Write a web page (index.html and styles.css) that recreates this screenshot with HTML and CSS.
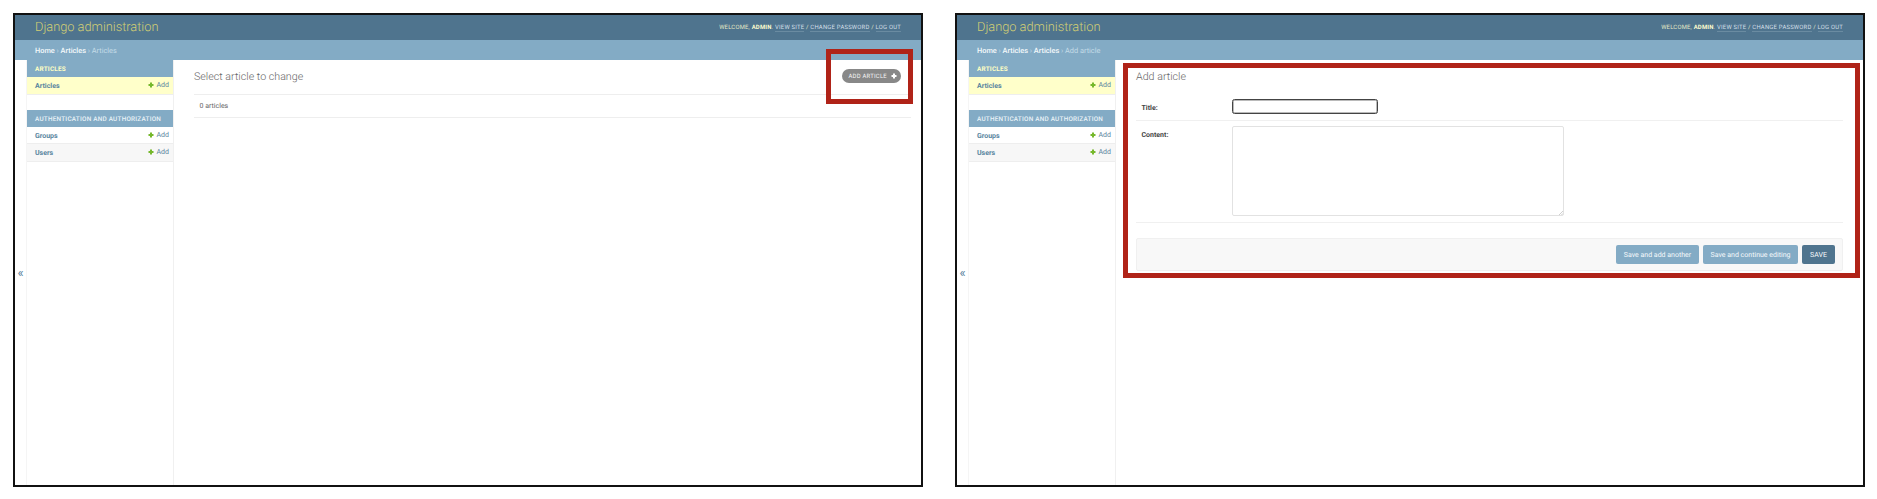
FILE: index.html
```html
<!DOCTYPE html>
<html lang="en">
<head>
<meta charset="utf-8">
<title>Django administration</title>
<link rel="stylesheet" href="styles.css">
</head>
<body>
<svg width="0" height="0" class="defs"><symbol id="plus" viewBox="0 0 12 12"><path d="M4 1h4v3h3v4H8v3H4V8H1V4h3z"/></symbol></svg>
<div class="board">
  <section class="panel">
    <header class="header">
      <h1 class="brand">Django administration</h1>
      <div class="tools">Welcome, <strong>admin</strong>. <a>View site</a> / <a>Change password</a> / <a>Log out</a></div>
    </header>
    <nav class="crumbs"><a>Home</a> › <a>Articles</a> › Articles</nav>
    <div class="body">
      <div class="toggle">«</div>
      <aside class="sidebar">
        <div class="module">
          <div class="caption current">Articles</div>
          <div class="row selected"><b>Articles</b><span class="add"><svg><use href="#plus"/></svg>Add</span></div>
        </div>
        <div class="module">
          <div class="caption">Authentication and Authorization</div>
          <div class="row"><b>Groups</b><span class="add"><svg><use href="#plus"/></svg>Add</span></div>
          <div class="row alt"><b>Users</b><span class="add"><svg><use href="#plus"/></svg>Add</span></div>
        </div>
      </aside>
      <main class="content list">
        <div class="titlebar">
          <h2 class="title">Select article to change</h2>
          <a class="addlink"><span>Add article</span><svg><use href="#plus"/></svg></a>
        </div>
        <p class="paginator">0 articles</p>
      </main>
    </div>
    <div class="mark mark-add"></div>
  </section>
  <section class="panel">
    <header class="header">
      <h1 class="brand">Django administration</h1>
      <div class="tools">Welcome, <strong>admin</strong>. <a>View site</a> / <a>Change password</a> / <a>Log out</a></div>
    </header>
    <nav class="crumbs"><a>Home</a> › <a>Articles</a> › <a>Articles</a> › Add article</nav>
    <div class="body">
      <div class="toggle">«</div>
      <aside class="sidebar">
        <div class="module">
          <div class="caption current">Articles</div>
          <div class="row selected"><b>Articles</b><span class="add"><svg><use href="#plus"/></svg>Add</span></div>
        </div>
        <div class="module">
          <div class="caption">Authentication and Authorization</div>
          <div class="row"><b>Groups</b><span class="add"><svg><use href="#plus"/></svg>Add</span></div>
          <div class="row alt"><b>Users</b><span class="add"><svg><use href="#plus"/></svg>Add</span></div>
        </div>
      </aside>
      <main class="content form">
        <div class="titlebar"><h2 class="title">Add article</h2></div>
        <div class="field field-title"><label>Title:</label><div class="input"></div></div>
        <div class="field field-content"><label>Content:</label><div class="textarea"><svg class="grip" viewBox="0 0 5 5"><path d="M0 5L5 0M3 5L5 3"/></svg></div></div>
        <div class="submit">
          <a class="btn another">Save and add another</a>
          <a class="btn continue">Save and continue editing</a>
          <a class="btn save">SAVE</a>
        </div>
      </main>
    </div>
    <div class="mark mark-form"></div>
  </section>
</div>
</body>
</html>
```
FILE: styles.css
```css
* { box-sizing: border-box; }
body { margin: 0; background: #fff; font: 7px/10px Roboto, sans-serif; color: #666; text-rendering: geometricPrecision; }
h1, h2, p { margin: 0; font-weight: 300; }
.defs { position: absolute; }
.board { display: flex; gap: 32px; padding: 13px 12px 12px 13px; width: 1877px; height: 499px; }
.panel { position: relative; display: flex; flex-direction: column; width: 910px; height: 474px; border: 2px solid #111; background: #fff; white-space: nowrap; }
.header { display: flex; justify-content: space-between; align-items: center; height: 25px; padding: 0 20px; background: #4f748e; color: #f0f0b8; }
.brand { font-size: 12.8px; line-height: 17px; color: #d2cf74; }
.tools { padding-top: 1px; font-size: 5.9px; text-transform: uppercase; letter-spacing: .22px; color: #e2e8c6; }
.tools a { color: #d2dfe7; border-bottom: 1px solid #6a8ba1; }
.tools strong { color: #ffffd0; }
.crumbs { height: 20px; padding: 1px 20px 0; line-height: 20px; font-size: 7.35px; background: #83abc5; color: #c4dce8; }
.crumbs a { color: #f6fafc; font-weight: 500; }
.body { display: flex; flex: 1; }
.toggle { display: flex; align-items: center; justify-content: center; width: 12px; padding-top: 2px; border-right: 1px solid #f5f5f5; font-size: 13px; color: #56809b; }
.sidebar { width: 147px; border-right: 1px solid #f0f0f0; }
.module { margin-bottom: 15px; }
.caption { height: 17px; padding: 1px 8px 0; line-height: 17px; font-size: 6.4px; font-weight: 500; letter-spacing: .23px; text-transform: uppercase; background: #83abc5; color: #eaf3f8; }
.caption.current { color: #ffffc4; font-weight: 700; }
.row { display: flex; justify-content: space-between; height: 17.5px; padding: 1px 4px 0 8px; line-height: 17px; border-bottom: 1px solid #eee; color: #5a86a0; }
.row b { font-weight: 700; }
.selected { background: #ffffca; }
.alt { background: #f7f7f7; }
.add { display: flex; align-items: center; gap: 2.5px; }
.add svg { width: 6px; height: 6px; margin-top: -1px; fill: #76b82c; }
.content { flex: 1; padding: 0 20px; }
.titlebar { display: flex; justify-content: space-between; height: 34px; padding-top: 9px; }
.title { font-size: 10.7px; line-height: 16px; color: #666; }
.list { padding-right: 10px; }
.list .titlebar { padding-right: 10px; }
.addlink { display: flex; align-items: center; justify-content: space-between; width: 59px; height: 14px; padding: 0 4.5px 0 6.5px; border-radius: 7px; background: #888; color: #f4f4f4; font-size: 5.9px; line-height: 14px; letter-spacing: .24px; text-transform: uppercase; }
.addlink span { padding-top: 1px; }
.addlink svg { width: 6px; height: 6px; fill: #fff; }
.paginator { height: 24px; padding: 0 5.5px; line-height: 23px; font-weight: 400; border: solid #eee; border-width: 1px 0; }
.form .titlebar { height: 33px; }
.field { display: flex; padding: 5px; border-bottom: 1px solid #f0f0f0; }
.field label { width: 91px; padding: 4px 0 0 .5px; font-weight: 700; color: #444; }
.field-title { height: 28px; padding-top: 6px; }
.field-content { height: 102px; }
.input { width: 146px; height: 15px; border: 1px solid #444; box-shadow: inset 0 0 0 .5px #777; border-radius: 2.5px; }
.textarea { display: flex; justify-content: flex-end; align-items: flex-end; width: 332px; height: 90px; border: 1px solid #e2e2e2; border-radius: 2px; }
.grip { width: 4px; height: 4px; fill: none; stroke: #999; stroke-width: .6; }
.submit { display: flex; justify-content: flex-end; align-items: center; gap: 4px; height: 33px; margin-top: 15px; padding: 0 7px; border: 1px solid #f0f0f0; border-radius: 2px; background: #f8f8f8; }
.btn { height: 19px; border-radius: 2px; line-height: 20px; text-align: center; color: #f6fafc; background: #83abc5; }
.another { width: 83px; }
.continue { width: 95px; }
.save { width: 33px; background: #4f748e; }
.mark { position: absolute; border: 5px solid #b02318; }
.mark-add { left: 811px; top: 34px; width: 87px; height: 55px; }
.mark-form { left: 166px; top: 48px; width: 737px; height: 215px; }
```
